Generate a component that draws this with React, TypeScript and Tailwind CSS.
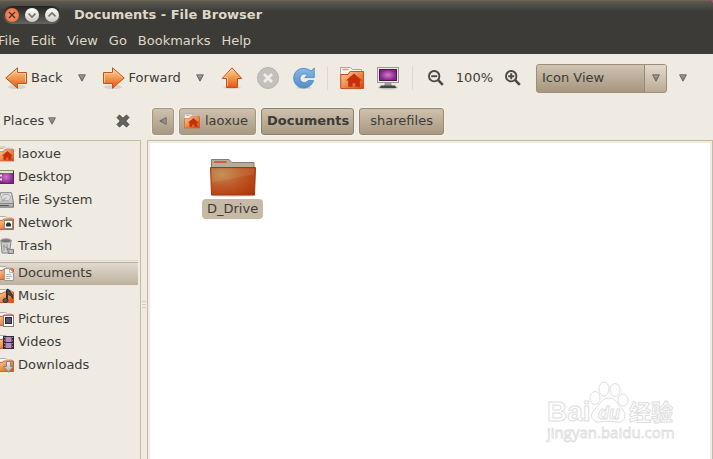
import type { ReactNode } from 'react';

const Gradients = () => (
    <svg width="0" height="0" className="absolute" aria-hidden="true">
        <defs>
            <linearGradient id="arrow" x1="0" y1="0" x2="0" y2="1">
                <stop offset="0" stopColor="#f9d49a" />
                <stop offset="0.5" stopColor="#f0984e" />
                <stop offset="1" stopColor="#ea5412" />
            </linearGradient>
            <linearGradient id="folder" x1="0" y1="0" x2="1" y2="1">
                <stop offset="0" stopColor="#f9d3a0" />
                <stop offset="0.5" stopColor="#ee8c4a" />
                <stop offset="1" stopColor="#d8420c" />
            </linearGradient>
            <linearGradient id="reload" x1="0" y1="0" x2="0" y2="1">
                <stop offset="0" stopColor="#8ab8e6" />
                <stop offset="1" stopColor="#508dcc" />
            </linearGradient>
            <linearGradient id="tri" x1="0" y1="0" x2="0" y2="1">
                <stop offset="0" stopColor="#a29f98" />
                <stop offset="1" stopColor="#74716a" />
            </linearGradient>
            <radialGradient id="screen">
                <stop offset="0" stopColor="#d678cb" />
                <stop offset="1" stopColor="#812388" />
            </radialGradient>
            <radialGradient id="bigFolder" cx="0.25" cy="0.25" r="0.95">
                <stop offset="0" stopColor="#c18a50" />
                <stop offset="0.5" stopColor="#bd5826" />
                <stop offset="1" stopColor="#b43509" />
            </radialGradient>
            <linearGradient id="metal" x1="0" y1="0" x2="0" y2="1">
                <stop offset="0" stopColor="#f4f4f2" />
                <stop offset="1" stopColor="#a8a8a6" />
            </linearGradient>
        </defs>
    </svg>
);

const Triangle = ({ className = '' }: { className?: string }) => (
    <svg width="8" height="8" viewBox="0 0 8 8" className={className}>
        <path d="M0.6 0.8h6.8L4 7.2z" fill="url(#tri)" stroke="#65625b" strokeWidth="0.9" />
    </svg>
);

const Arrow = ({ flip = false }: { flip?: boolean }) => (
    <svg width="22" height="22" viewBox="0 0 22 22" className={flip ? 'shrink-0 -scale-x-100' : 'shrink-0'}>
        <ellipse cx="12" cy="20" rx="9" ry="2" fill="#d8d2ca" />
        <path d="M0.8 11L12.5 0.8V5.5h9v11h-9v4.8z" fill="url(#arrow)" stroke="#c4501c" />
        <path d="M2.6 11L11.5 3.2V6.5h9v9" fill="none" stroke="#fbd9ac" strokeOpacity="0.7" />
    </svg>
);

const UpArrow = () => (
    <svg width="22" height="22" viewBox="0 0 22 22">
        <ellipse cx="11" cy="20.5" rx="9" ry="1.5" fill="#d8d2ca" />
        <path d="M11 0.8L20.8 11.5H16.5v9h-11v-9H1.2z" fill="url(#arrow)" stroke="#c4501c" />
        <path d="M6.5 19V10.5H3.4L11 2.2" fill="none" stroke="#fbd9ac" strokeOpacity="0.7" />
    </svg>
);

const StopIcon = () => (
    <svg width="22" height="22" viewBox="0 0 22 22">
        <circle cx="11" cy="11" r="10.5" fill="#c4c0bb" stroke="#b5b1ac" />
        <path d="M7 7l8 8M15 7l-8 8" stroke="#f0eeea" strokeWidth="2.8" />
    </svg>
);

const ReloadIcon = () => (
    <svg width="22" height="22" viewBox="0 0 22 22">
        <ellipse cx="11" cy="20.8" rx="8" ry="1.2" fill="#d8d2ca" />
        <path
            d="M18 4L21.3 1v9.6h-9.6L14.5 7.8C11.500 5.8 7 7.5 7 11.3C7 15.8 12.8 17 15 13.5h5.6C19 18.6 14.6 21 10.6 21C4.8 21 0.7 16.6 0.7 11C0.7 2.2 10.8-1.6 18 4z"
            fill="url(#reload)"
            stroke="#4783c0"
            strokeWidth="0.8"
        />
    </svg>
);

const HomeFolder = ({ size = 16 }: { size?: number }) => (
    <svg width={size} height={size} viewBox="0 0 24 24" className="shrink-0">
        <path d="M0.5 22V1.500h10l2 2h9V20" fill="#f7f5f2" stroke="#aaa6a0" />
        <path d="M2.5 3.5h6" stroke="#ef9563" strokeWidth="1.4" />
        <path d="M0.8 22.5V8.5H8l2-3h13.5v17z" fill="url(#folder)" stroke="#c95423" />
        <path d="M14 7.5l8 7h-2.2v6.2h-4.3v-3.5h-3v3.5H8.2v-6.2H6z" fill="#c52f0c" />
    </svg>
);

const ComputerIcon = () => (
    <svg width="24" height="24" viewBox="0 0 24 24">
        <ellipse cx="12" cy="21.5" rx="10" ry="2" fill="#c5c1ba" />
        <path d="M9 16h6l1 4H8z" fill="#999" />
        <path d="M5 19.5h14l1.500 2.500h-17z" fill="#454545" />
        <rect x="1.5" y="1.5" width="21" height="15" fill="#e8e8e6" stroke="#9b9a97" />
        <rect x="3.5" y="3.5" width="17" height="11" fill="url(#screen)" stroke="#521655" />
    </svg>
);

const Magnifier = ({ plus = false }: { plus?: boolean }) => (
    <svg width="16" height="16" viewBox="0 0 16 16" fill="none" stroke="#4a4845">
        <circle cx="6.2" cy="6.2" r="5.2" strokeWidth="1.9" />
        <path d="M10.2 10.2l4.6 4.6" strokeWidth="2.6" />
        <path d={plus ? 'M3.2 6.2h6M6.2 3.2v6' : 'M3.2 6.2h6'} strokeWidth="1.9" />
    </svg>
);

/* Small folder with an emblem drawn over its lower right corner */
const EmblemFolder = ({ children }: { children: ReactNode }) => (
    <svg width="16" height="16" viewBox="0 0 16 16" className="shrink-0">
        <path d="M0.5 14V1.5h7l2 1.5h4.5v4" fill="#f7f5f2" stroke="#b0aca6" />
        <path d="M0.5 14.5v-9H4l2-1.5h9.5v10.5z" fill="url(#folder)" stroke="#d2602d" />
        {children}
    </svg>
);

const DesktopIcon = () => (
    <svg width="16" height="16" viewBox="0 0 16 16" className="shrink-0">
        <rect x="0.5" y="1.5" width="15" height="13" fill="url(#screen)" stroke="#6b1b70" />
        <path d="M1 3h14" stroke="#e4e3c4" strokeWidth="2" />
        <path d="M0 1.5h16" stroke="#8b8a6c" />
        <path d="M2 6.5h2M2 10.5h2" stroke="#f5e6f3" strokeWidth="2" />
    </svg>
);

const DriveIcon = () => (
    <svg width="16" height="16" viewBox="0 0 16 16" className="shrink-0">
        <path d="M2.5 0.8h11l2 10v4.4h-15v-4.4z" fill="url(#metal)" stroke="#777" />
        <ellipse cx="8" cy="5.5" rx="4.5" ry="3.2" fill="#dededc" stroke="#aaa" />
        <path d="M8 5.5l-4 4M1 11.5h14" stroke="#888" />
        <path d="M2 13.5h9" stroke="#555" />
    </svg>
);

const TrashIcon = () => (
    <svg width="16" height="16" viewBox="0 0 16 16" className="shrink-0">
        <path d="M3 3l1 12h7.5L13 3z" fill="#cfcfcd" stroke="#858583" />
        <ellipse cx="8" cy="2.7" rx="5.5" ry="2" fill="#777775" stroke="#a9a9a7" />
        <path d="M6 6v7M9 6v6M5 8l5 2" stroke="#939391" />
        <path d="M9.5 10.5l3 1 3 0v4h-5z" fill="#bbb" stroke="#777" />
    </svg>
);

const BigFolder = () => (
    <svg width="48" height="40" viewBox="0 0 48 40">
        <ellipse cx="24" cy="37.5" rx="23" ry="1.5" fill="#e2ddd7" />
        <path d="M2.5 12V1.5h17.5l3 3h22V12z" fill="#b5ac9c" stroke="#867d70" />
        <path d="M5 4h12.5" stroke="#c6653b" strokeWidth="2" />
        <path d="M1.5 9.5h45l-1 27.5h-43z" fill="url(#bigFolder)" stroke="#9c3b10" />
        <path d="M2.5 10.5h43l-0.3 6C33 17.5 17 23 3 24z" fill="#d9b487" fillOpacity="0.16" />
    </svg>
);

const Watermark = () => (
    <svg width="130" height="62" viewBox="0 0 130 62" className="absolute right-9 bottom-4" fill="#fff" stroke="#dedede">
        <text x="1" y="40" fontFamily="Liberation Sans, sans-serif" fontWeight="700" fontSize="28">Bai</text>
        <ellipse cx="49" cy="17" rx="5" ry="6.5" />
        <ellipse cx="58" cy="8" rx="5" ry="7" />
        <ellipse cx="69" cy="9" rx="5" ry="6.5" />
        <ellipse cx="77" cy="19" rx="5" ry="6" />
        <path d="M63 17C70 17 71 23 77 29C81 34 79 42 71 41C66 40 60 40 54 41C46 42 43 34 48 29C54 24 55 17 63 17z" />
        <text x="52" y="38" fontFamily="Liberation Sans, sans-serif" fontStyle="italic" fontWeight="700" fontSize="18">du</text>
        <text x="83" y="39" fontFamily="Noto Sans CJK SC, sans-serif" fontWeight="700" fontSize="22">经验</text>
        <text x="1" y="57" fontFamily="Open Sans, sans-serif" fontSize="15" strokeWidth="0.8">jingyan.baidu.com</text>
    </svg>
);

const places = [
    { name: 'laoxue', icon: <HomeFolder /> },
    { name: 'Desktop', icon: <DesktopIcon /> },
    { name: 'File System', icon: <DriveIcon /> },
    {
        name: 'Network',
        icon: (
            <EmblemFolder>
                <rect x="6.5" y="5.5" width="8" height="8" fill="#fff" stroke="#8b8984" />
                <path d="M9 7.5h3v1h1v3H8v-3h1z" fill="#333" />
            </EmblemFolder>
        ),
    },
    { name: 'Trash', icon: <TrashIcon /> },
];

const bookmarks = [
    {
        name: 'Documents',
        icon: (
            <EmblemFolder>
                <path d="M6.5 3.5h5l4 4v8h-9z" fill="#f5f5f3" stroke="#9a9894" />
                <path d="M11.5 3.5v4h4M8 9.5h5M8 11.5h6M8 13.5h4" fill="none" stroke="#b6b4b0" />
            </EmblemFolder>
        ),
    },
    {
        name: 'Music',
        icon: (
            <EmblemFolder>
                <path d="M9 2v9.5" stroke="#2c2c2b" strokeWidth="2" />
                <path d="M9 1l3 1.500c0 3 3.500 3 2.500 8c-1-3-3-4-5.500-4z" fill="#4a4a48" stroke="#2c2c2b" />
                <ellipse cx="7.5" cy="12.5" rx="2.5" ry="2" fill="#5a5a58" stroke="#2c2c2b" />
            </EmblemFolder>
        ),
    },
    {
        name: 'Pictures',
        icon: (
            <EmblemFolder>
                <rect x="5.5" y="4.5" width="10" height="11" fill="#fff" stroke="#807e7b" />
                <rect x="7.5" y="6.5" width="6" height="6" fill="#5c5071" stroke="#2b2637" />
            </EmblemFolder>
        ),
    },
    {
        name: 'Videos',
        icon: (
            <EmblemFolder>
                <rect x="5.5" y="2.5" width="10" height="12" fill="#b58ac0" stroke="#332a33" />
                <path d="M6.5 3v11M14.5 3v11" stroke="#332a33" strokeWidth="2" />
                <path d="M6.5 3v11M14.5 3v11" stroke="#e76c4f" strokeDasharray="1 2" />
                <path d="M7 8.5h7" stroke="#332a33" />
            </EmblemFolder>
        ),
    },
    {
        name: 'Downloads',
        icon: (
            <EmblemFolder>
                <path d="M8.5 4.5h4v5h3l-5 5.800l-5-5.800h3z" fill="url(#metal)" stroke="#85837f" />
            </EmblemFolder>
        ),
    },
];

const pathButton =
    'flex h-[27px] items-center justify-center rounded-[3px] border bg-linear-to-b from-[#cec1ae] to-[#a99982] shadow-[0_0_0_1px_#f6f2ec]';

const PlaceRow = ({ name, icon, active = false }: { name: string; icon: ReactNode; active?: boolean }) => (
    <li>
        <button
            className={
                active
                    ? 'flex h-[23px] w-full items-center gap-1 border-t border-[#b9ac99] bg-linear-to-b from-[#e1dad0] to-[#beb19e] pb-0.5'
                    : 'flex h-[23px] w-full items-center gap-1 pb-0.5'
            }
        >
            <span className="-ml-0.5">{icon}</span>
            {name}
        </button>
    </li>
);

const TitleBar = () => (
    <div className="bg-[#a4527f]">
        <header className="overflow-hidden rounded-tr-[5px] bg-[#3c3b37] text-[#dfd8c8]">
            <div className="flex h-7 items-center gap-[13px] border-t border-[#6f6452] bg-linear-to-b from-[#5b5a53] to-[#3c3b37] to-40%">
                <div className="ml-[3px] flex h-[18px] items-center gap-1.5 rounded-full bg-linear-to-b from-[#24231f] to-[#64635c] px-0.5">
                    <button aria-label="Close" className="flex size-[14px] items-center justify-center rounded-full bg-radial from-[#f79b78] to-[#e95f2d]">
                        <svg width="8" height="8" viewBox="0 0 8 8" stroke="#5b2716" strokeWidth="1.4"><path d="M1 1l6 6M7 1l-6 6" /></svg>
                    </button>
                    <button aria-label="Minimize" className="flex size-[14px] items-center justify-center rounded-full bg-linear-to-b from-white to-[#cfcac1]">
                        <svg width="8" height="8" viewBox="0 0 8 8" fill="none" stroke="#76736d" strokeWidth="1.6"><path d="M0.5 2.5L4 6l3.5-3.5" /></svg>
                    </button>
                    <button aria-label="Maximize" className="flex size-[14px] items-center justify-center rounded-full bg-linear-to-b from-white to-[#cfcac1]">
                        <svg width="8" height="8" viewBox="0 0 8 8" fill="none" stroke="#76736d" strokeWidth="1.6"><path d="M0.5 5.5L4 2l3.5 3.5" /></svg>
                    </button>
                </div>
                <h1 className="font-bold">Documents - File Browser</h1>
            </div>
            <nav className="-ml-0.5 flex h-[26px] items-center gap-[11px]">
                <button>File</button>
                <button>Edit</button>
                <button>View</button>
                <button>Go</button>
                <button>Bookmarks</button>
                <button>Help</button>
            </nav>
        </header>
    </div>
);

const Toolbar = () => (
    <div className="flex h-12 items-center pl-[5px]">
        <button className="flex items-center gap-1"><Arrow />Back</button>
        <button aria-label="Back history" className="ml-[15px]"><Triangle /></button>
        <button className="ml-[17px] flex items-center gap-1"><Arrow flip />Forward</button>
        <button aria-label="Forward history" className="ml-[15px]"><Triangle /></button>
        <div className="ml-[17px] flex items-center gap-[14px]">
            <button aria-label="Up"><UpArrow /></button>
            <button aria-label="Stop"><StopIcon /></button>
            <button aria-label="Reload"><ReloadIcon /></button>
        </div>
        <div className="ml-3 h-6 w-px bg-[#dfd9c9]"></div>
        <div className="ml-3 flex items-center gap-3">
            <button aria-label="Home"><HomeFolder size={24} /></button>
            <button aria-label="Computer"><ComputerIcon /></button>
        </div>
        <div className="ml-3 h-6 w-px bg-[#dfd9c9]"></div>
        <div className="ml-[15px] flex items-center gap-3">
            <button aria-label="Zoom out"><Magnifier /></button>
            <span>100%</span>
            <button aria-label="Zoom in"><Magnifier plus /></button>
        </div>
        <div className="relative ml-[15px]">
            <select
                aria-label="View mode"
                className="h-[29px] w-[131px] appearance-none rounded-[3px] border border-[#9b8e7b] bg-linear-to-b from-[#cfc3b2] to-[#a7967f] pl-[5px]"
            >
                <option>Icon View</option>
                <option>List View</option>
                <option>Compact View</option>
            </select>
            <span className="pointer-events-none absolute inset-y-px right-px flex w-[22px] items-center justify-center rounded-r-[2px] border-l border-[#95897a] bg-linear-to-b from-[#e3dace] to-[#b9aa95]">
                <Triangle />
            </span>
        </div>
        <button aria-label="More" className="ml-3"><Triangle /></button>
    </div>
);

export default function App() {
    return (
        <div className="flex min-h-screen flex-col overflow-hidden bg-[#efebe3] font-['DejaVu_Sans',sans-serif] text-[13px] leading-4 text-[#3c3b37]">
            <Gradients />
            <TitleBar />
            <Toolbar />
            <div className="flex flex-1">
                <aside className="flex w-[141px] shrink-0 flex-col">
                    <div className="flex h-[38px] items-center justify-between pr-[11px] pl-[3px]">
                        <button className="flex items-center gap-1">Places <Triangle /></button>
                        <button aria-label="Close side pane">
                            <svg width="14" height="14" viewBox="0 0 14 14">
                                <path d="M3.5 1L7 4.3L10.5 1L13 3.5L9.7 7L13 10.5L10.5 13L7 9.7L3.5 13L1 10.5L4.3 7L1 3.5z" fill="#64635f" stroke="#4a4946" />
                            </svg>
                        </button>
                    </div>
                    <div className="flex-1 border-t border-r border-[#c9b99f] pt-0.5 pr-0.5">
                        <ul>
                            {places.map((p) => <PlaceRow key={p.name} {...p} />)}
                        </ul>
                        <hr className="mt-0.5 mb-px border-[#dcd5c8]" />
                        <ul>
                            {bookmarks.map((b) => <PlaceRow key={b.name} {...b} active={b.name === 'Documents'} />)}
                        </ul>
                    </div>
                </aside>
                {/* Pane resize grip */}
                <div className="flex w-1.5 cursor-col-resize flex-col items-center justify-center gap-0.5 pt-12">
                    <span className="h-px w-1 bg-[#d6cdbd]"></span>
                    <span className="h-px w-1 bg-[#d6cdbd]"></span>
                    <span className="h-px w-1 bg-[#d6cdbd]"></span>
                </div>
                <main className="flex min-w-0 flex-1 flex-col">
                    <nav className="flex h-[38px] items-center gap-[5px] pl-[5px]">
                        <button aria-label="Scroll path left" className={`${pathButton} w-[22px] border-[#a39782]`}>
                            <Triangle className="rotate-90" />
                        </button>
                        <button className={`${pathButton} gap-[5px] border-[#a39782] pr-[7px] pl-1`}><HomeFolder />laoxue</button>
                        <button className={`${pathButton} border-[#897d6a] pr-1 pl-[5px] font-bold`}>Documents</button>
                        <button className={`${pathButton} border-[#94886f] px-2.5`}>sharefiles</button>
                    </nav>
                    <section className="relative flex flex-1 flex-col border border-b-0 border-[#c9b99f] bg-[#f0ece2] px-0.5 pt-0.5">
                        <div className="flex-1 bg-white">
                            <button className="mt-[15px] ml-[52px] flex flex-col items-center gap-px">
                                <BigFolder />
                                <span className="rounded-[4px] bg-[#c6b9a6] px-[5px] py-0.5">D_Drive</span>
                            </button>
                        </div>
                        <Watermark />
                    </section>
                </main>
            </div>
        </div>
    );
}
